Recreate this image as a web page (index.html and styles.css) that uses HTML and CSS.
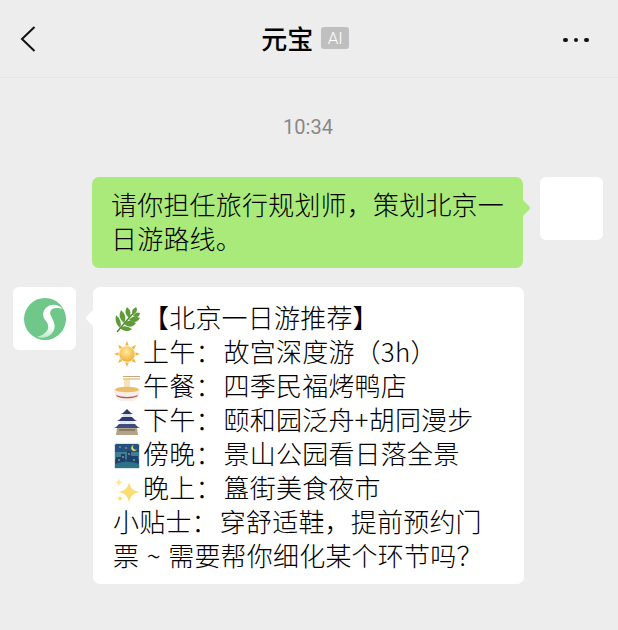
FILE: index.html
```html
<!DOCTYPE html>
<html>
<head>
<meta charset="utf-8">
<title>元宝</title>
<link rel="stylesheet" href="styles.css">
</head>
<body>
<div class="top-bar">
	<svg class="back" width="16" height="26" viewBox="0 0 16 26"><path d="M14.500 1 2 13l12.500 12" fill="none" stroke="#111" stroke-width="2"/></svg>
	<div class="title"><span>元宝</span><b class="ai-tag">AI</b></div>
	<div class="more"><i></i><i></i><i></i></div>
</div>
<div class="time">10:34</div>

<div class="row row-me">
	<div class="bubble bubble-me">请你担任旅行规划师，策划北京一日游路线。</div>
	<div class="avatar"></div>
</div>

<div class="row row-bot">
	<div class="avatar avatar-bot">
		<svg width="42" height="42" viewBox="0 0 42 42">
			<defs>
				<linearGradient id="swirl" x1="0" y1="0" x2="0" y2="1">
					<stop offset="0.65" stop-color="#fff"/>
					<stop offset="1" stop-color="#bfe8cb"/>
				</linearGradient>
			</defs>
			<circle cx="21" cy="21" r="21" fill="#6fc78a"/>
			<path d="M39 11C35 7 28 5 23 9c-5 4-5 10-1 14 3 4 3 8 0 11-2 2-5 4-9 5 7 2 14 0 17-7 2-5-1-10-3-14-2-4 0-8 5-8 3 0 5 0 7 1z" fill="url(#swirl)"/>
		</svg>
	</div>
	<div class="bubble bubble-bot">
		<div class="line">
			<svg class="emoji" viewBox="0 0 26 26">
				<path d="M3 25C8 19 14 12 22 3" fill="none" stroke="#4f7f2a" stroke-width="1.300"/>
				<g fill="#5f9c38">
					<path d="M19 8Q16 3 22 0Q25 4 19 8z"/>
					<path d="M15 11Q9 6 13 0Q19 5 15 11z"/>
					<path d="M19 9Q22 4 26 6Q25 12 19 9z"/>
					<path d="M10 16Q3 11 7 3Q14 9 10 16z"/>
					<path d="M15 13Q19 7 26 11Q22 18 15 13z"/>
					<path d="M6 21Q0 16 2 8Q9 14 6 21z"/>
					<path d="M10 17Q14 11 22 16Q17 23 10 17z"/>
					<path d="M6 21Q11 17 18 22Q12 27 6 21z"/>
				</g>
			</svg>【北京一日游推荐】
		</div>
		<div class="line">
			<svg class="emoji" viewBox="0 0 26 26">
				<defs>
					<radialGradient id="sun" cx="0.45" cy="0.35" r="0.7">
						<stop offset="0" stop-color="#fdeb9c"/>
						<stop offset="1" stop-color="#f4a92f"/>
					</radialGradient>
				</defs>
				<g fill="#f6b440">
					<path d="M13 0l1.800 4.500h-3.600zM13 26l1.800-4.500h-3.600zM0 13l4.500-1.800v3.600zM26 13l-4.500-1.800v3.600zM4 4l4.500 1.900-2.600 2.600zM22 22l-4.500-1.900 2.600-2.600zM22 4l-1.900 4.500-2.600-2.600zM4 22l1.900-4.500 2.600 2.600z"/>
				</g>
				<circle cx="13" cy="13" r="7.800" fill="url(#sun)"/>
			</svg>上午<span class="colon">：</span>故宫深度游（3h）
		</div>
		<div class="line">
			<svg class="emoji" viewBox="0 0 26 26">
				<path d="M9 1.500h17M9 4h17" stroke="#c9a677" stroke-width="1.200"/>
				<path d="M11 3v11M13 3v11M15 3v11" stroke="#efcd7c" stroke-width="1.100"/>
				<path d="M0 14c0 7 4 12 7 12h12c3 0 7-5 7-12z" fill="#f3eeea"/>
				<ellipse cx="13" cy="14.500" rx="12" ry="2.800" fill="#ebbd6a"/>
				<path d="M2 20c6 2.600 16 2.600 22 0l-.8 1.400c-6 2.600-14.400 2.600-20.400 0z" fill="#c4554c"/>
			</svg>午餐<span class="colon">：</span>四季民福烤鸭店
		</div>
		<div class="line">
			<svg class="emoji" viewBox="0 0 26 26">
				<path d="M13 0l4 4 2 1H7l2-1z" fill="#2f3a6c"/>
				<rect x="9" y="5" width="8" height="3" fill="#d9dde8"/>
				<path d="M8 8h10l3 3 2 1H3l2-1z" fill="#2f3a6c"/>
				<rect x="6" y="12" width="14" height="3" fill="#e6e6ea"/>
				<path d="M5 15h16l3 3 2 1H0l2-1z" fill="#414d80"/>
				<path d="M3 19h20l1 7H2z" fill="#b2a28a"/>
				<rect x="5" y="20" width="16" height="2" fill="#8b7c66"/>
			</svg>下午<span class="colon">：</span>颐和园泛舟+胡同漫步
		</div>
		<div class="line">
			<svg class="emoji" viewBox="0 0 26 26">
				<rect x=".5" y=".5" width="25" height="25" rx="2" fill="#24517f" stroke="#dfe4ea"/>
				<path d="M1 9h24v7H1z" fill="#3d7f95"/>
				<path d="M2 25V14h5v-3h4v14zM13 25V8h4v5h7v12z" fill="#1d3f70"/>
				<path d="M1 21c8-3 16-3 24 0v4H1z" fill="#2c7385"/>
				<g fill="#e6d85c">
					<circle cx="5" cy="17" r=".8"/><circle cx="15" cy="11" r=".8"/><circle cx="20" cy="17" r=".8"/><circle cx="9" cy="14" r=".8"/><circle cx="6" cy="4" r=".7"/><circle cx="12" cy="5" r=".7"/>
					<path d="M20 2a3 3 0 1 0 3 4 2.500 2.500 0 0 1-3-4z"/>
				</g>
			</svg>傍晚<span class="colon">：</span>景山公园看日落全景
		</div>
		<div class="line">
			<svg class="emoji" viewBox="0 0 26 26">
				<g fill="#fbdc72">
					<path d="M15 5c1 6 4 9 11 10-7 1-10 4-11 11-1-7-4-10-11-11 7-1 10-4 11-10z"/>
					<path d="M5 1c.4 3 1.300 4 4 4.400C6.300 5.800 5.400 6.800 5 10c-.4-3.200-1.300-4.200-4-4.600C3.700 5 4.600 4 5 1z" opacity=".75"/>
					<path d="M6 18c.3 2.300 1 3 3.200 3.400C7 21.800 6.300 22.500 6 25c-.3-2.500-1-3.200-3.200-3.600C5 21 5.700 20.300 6 18z"/>
				</g>
			</svg>晚上<span class="colon">：</span>簋街美食夜市
		</div>
		<div class="line">小贴士<span class="colon">：</span>穿舒适鞋，提前预约门</div>
		<div class="line">票 ~ 需要帮你细化某个环节吗？</div>
	</div>
</div>
</body>
</html>
```

FILE: styles.css
```css
html,body{margin: 0;padding: 0;}
body{width: 618px;height: 630px;overflow: hidden;background-color: #ededed;color: #000;font-family: "Liberation Sans","Noto Sans CJK SC",sans-serif;}
.top-bar{display: flex;align-items: center;justify-content: space-between;height: 77px;padding: 0 29px 0 20px;border-bottom: 1px solid #e6e6e6;}
.back{display: block;}
.title{display: flex;align-items: center;gap: 8px;margin: -2px 0 0 11px;font-family: "Noto Sans CJK SC",sans-serif;font-size: 26px;line-height: 28px;font-weight: 500;}
.ai-tag{width: 28px;height: 22px;border-radius: 3px;background-color: #bfbfbf;color: #fff;font: 300 17px/22px "Roboto",sans-serif;text-align: center;}
.more{display: flex;gap: 6px;margin-top: 3px;}
.more i{width: 4.500px;height: 4.500px;border-radius: 50%;background-color: #111;}
.time{margin-top: 37px;padding-right: 2px;height: 24px;font: 400 20px/24px "Roboto",sans-serif;text-align: center;color: #888;}
.row{display: flex;gap: 17px;}
.row-me{margin-top: 38px;justify-content: flex-end;padding-right: 15px;}
.row-bot{margin-top: 19px;padding-left: 13px;}
.avatar{width: 63px;height: 63px;border-radius: 6px;background-color: #fff;flex: none;}
.avatar-bot{display: flex;align-items: center;justify-content: center;}
.bubble{position: relative;font-family: "Noto Sans CJK SC",sans-serif;font-size: 26px;font-weight: 300;letter-spacing: .2px;line-height: 34px;border-radius: 7px;}
.bubble:before{content: "";position: absolute;top: 24px;width: 14px;height: 14px;border-radius: 2px;transform: rotate(45deg);}
.bubble-me{width: 395px;padding: 10px 17px 13px 19px;background-color: #a9ea7a;}
.bubble-me:before{right: -5px;background-color: #a9ea7a;}
.bubble-bot{width: 391px;padding: 13px 20px 12px;background-color: #fff;}
.bubble-bot:before{left: -5px;background-color: #fff;}
.line{height: 34px;white-space: nowrap;word-spacing: 1.500px;}
.emoji{width: 26px;height: 26px;margin: 0 3px 0 1px;vertical-align: -5px;}
.colon{margin-right: 2px;}
```
